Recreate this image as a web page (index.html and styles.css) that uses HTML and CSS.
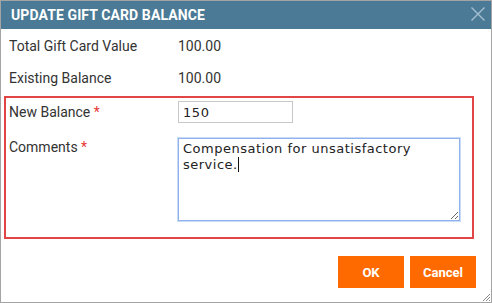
FILE: index.html
```html
<!DOCTYPE html>
<html>
<head>
<meta charset="utf-8">
<link rel="stylesheet" href="styles.css">
</head>
<body>
<div class="window">
  <div class="titlebar">
    <span class="title">Update Gift Card Balance</span>
    <svg class="close" width="16" height="16" viewBox="0 0 16 16"><path d="M1.5 1.5 L14.5 14.5 M14.5 1.5 L1.5 14.5" stroke="#a6c0d1" stroke-width="1.4" fill="none"/></svg>
  </div>
  <div class="content">
    <div class="row">
      <div class="label">Total Gift Card Value</div>
      <div class="value">100.00</div>
    </div>
    <div class="row">
      <div class="label">Existing Balance</div>
      <div class="value">100.00</div>
    </div>
    <div class="group">
      <div class="field field-center">
        <div class="label">New Balance <span class="req">*</span></div>
        <input class="input" type="text" value="150">
      </div>
      <div class="field field-top">
        <div class="label">Comments <span class="req">*</span></div>
        <div class="ta-wrap">
          <textarea class="textarea">Compensation for unsatisfactory service.</textarea>
          <span class="caret"></span>
        </div>
      </div>
    </div>
    <div class="actions">
      <button class="btn">OK</button>
      <button class="btn">Cancel</button>
    </div>
  </div>
  <svg class="grip" width="10" height="10" viewBox="0 0 10 10"><path d="M9 2 L2 9 M9 5 L5 9 M9 8 L8 9" stroke="#8a8a8a" stroke-width="1" fill="none"/></svg>
</div>
</body>
</html>
```
FILE: styles.css
```css
html, body {
  margin: 0;
  padding: 0;
  background: #ffffff;
}
.window {
  position: relative;
  width: 492px;
  height: 303px;
  box-sizing: border-box;
  border: 1px solid #a4a4a4;
  background: #ffffff;
  font-family: Roboto, "Liberation Sans", sans-serif;
  color: #333333;
  overflow: hidden;
}
.titlebar {
  height: 28px;
  background: #4a7a95;
  display: flex;
  align-items: center;
  justify-content: space-between;
  padding: 0 5px 0 10px;
}
.title {
  color: #ffffff;
  font-weight: 700;
  font-size: 14px;
  text-transform: uppercase;
  letter-spacing: 0.1px;
  padding-bottom: 1px;
}
.close {
  display: block;
  margin-top: -2px;
}
.content {
  padding: 1px 0 0 0;
}
.row {
  height: 32px;
  display: flex;
  align-items: center;
  padding-left: 8px;
}
.label {
  width: 169px;
  font-size: 14px;
  line-height: 18px;
  color: #333333;
  flex: none;
}
.value {
  font-size: 14px;
  color: #333333;
}
.req {
  color: #e53935;
}
.group {
  margin: 2px 17px 0 3px;
  border: 2px solid #e24545;
  padding: 3px 0 16px 3px;
}
.field {
  display: flex;
}
.field-center {
  align-items: center;
}
.field-top {
  align-items: flex-start;
  margin-top: 15px;
}
.input {
  width: 115px;
  height: 22px;
  box-sizing: border-box;
  border: 1px solid #c8c8c8;
  padding: 0 4px;
  margin: 0;
  font-family: "DejaVu Sans", sans-serif;
  font-size: 13px;
  letter-spacing: 0.6px;
  color: #222222;
  outline: none;
}
.ta-wrap {
  position: relative;
  display: flex;
}
.textarea {
  width: 282px;
  height: 83px;
  box-sizing: border-box;
  margin: 0;
  border: 1px solid #8fb2ec;
  box-shadow: 0 0 0 1px #c9dbf6;
  padding: 2px 4px;
  font-family: "DejaVu Sans", sans-serif;
  font-size: 13px;
  letter-spacing: 0.5px;
  line-height: 16px;
  color: #222222;
  outline: none;
}
.caret {
  position: absolute;
  left: 60px;
  top: 19px;
  width: 1px;
  height: 15px;
  background: #111111;
}
.actions {
  display: flex;
  justify-content: flex-end;
  gap: 6px;
  margin: 17px 15px 0 0;
}
.btn {
  width: 66px;
  height: 32px;
  border: none;
  margin: 0;
  padding: 0;
  background: #ff6a00;
  color: #ffffff;
  font-family: Roboto, "Liberation Sans", sans-serif;
  font-weight: 700;
  font-size: 13px;
}
.grip {
  position: absolute;
  right: 0;
  bottom: 0;
}
```
